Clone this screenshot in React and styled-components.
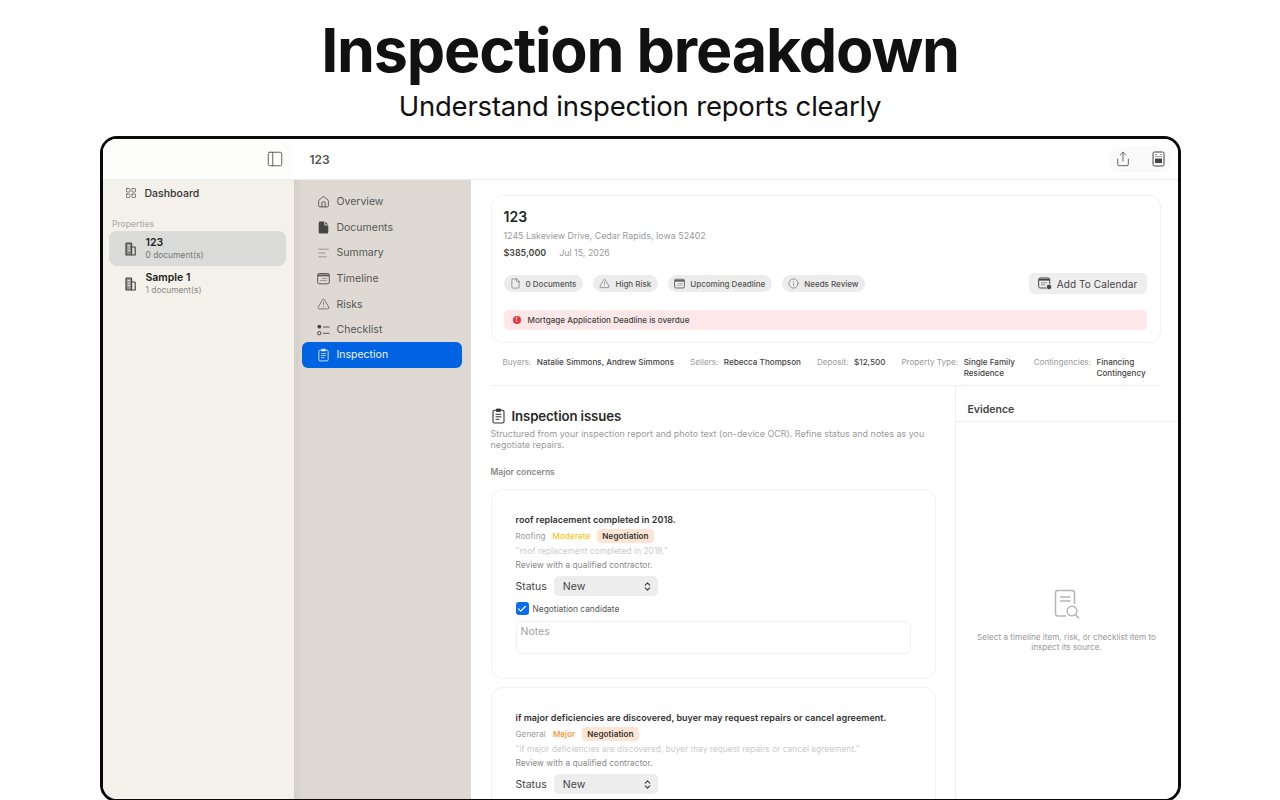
import React from "react";
import styled, { createGlobalStyle } from "styled-components";
import { LayoutGrid, House, TriangleAlert, Share, AlignLeft, Check, ChevronsUpDown, PanelLeft, File, Info } from "lucide-react";

const Global = createGlobalStyle`
  html, body { margin: 0; padding: 0; background: #fff; height: 800px; overflow: hidden; }
  body { font-family: Inter, "Liberation Sans", sans-serif; color: #222; }
  * { box-sizing: border-box; }
`;

const Page = styled.div`
  width: 1280px; height: 800px; overflow: hidden; display: flex; flex-direction: column; align-items: center;
`;
const Hero = styled.header`
  height: 136px; flex: none; width: 100%; text-align: center; padding-top: 12px;
`;
const HeroTitle = styled.h1`
  margin: 0; font-size: 61px; line-height: 76px; font-weight: 700; color: #111; letter-spacing: -1.2px;
`;
const HeroSub = styled.p`
  margin: 0; font-size: 27.5px; line-height: 37px; font-weight: 400; color: #111; letter-spacing: -0.2px;
`;
const Frame = styled.section`
  position: relative; width: 1081px; height: 666px; flex: none; border: 3px solid #0a0a0a; border-radius: 17px;
  display: flex; flex-direction: column; background: #fff;
  &::before { content: ""; position: absolute; left: -3px; right: -3px; top: -2px; height: 1px; background: #555; z-index: -1; }
`;
const Clip = styled.div`
  flex: 1; min-height: 0; display: flex; flex-direction: column; overflow: hidden; border-radius: 14px;
`;
const TopBar = styled.div`
  height: 41px; flex: none; display: flex; align-items: center; border-bottom: 1px solid #ececea; background: #fff;
`;
const TopLeft = styled.div`
  width: 191px; height: 100%; display: flex; align-items: center; justify-content: flex-end; padding-right: 10px;
  background: #fdfdfc; border-top-right-radius: 14px; color: #555;
`;
const TopTitle = styled.div`
  margin-left: 16px; font-size: 12px; font-weight: 600; color: #555; flex: 1;
`;
const ToolCapsule = styled.div`
  width: 64px; height: 26px; margin-right: 6px; border-radius: 13px; background: #fafafa; display: flex; align-items: center;
  justify-content: space-between; padding: 0 7px 0 7px; color: #555;
`;
const Body = styled.div`
  flex: 1; min-height: 0; display: flex;
`;
const Sidebar = styled.aside`
  width: 191px; flex: none; background: #f4f1ea; padding: 3px 8px 0 6px;
`;
const DashRow = styled.div`
  height: 20px; display: flex; align-items: center; gap: 8px; padding-left: 16px; font-size: 10.5px; font-weight: 500; color: #333;
`;
const SideLabel = styled.div`
  margin: 15px 0 0 3.5px; height: 12px; line-height: 12px; font-size: 8.5px; font-weight: 500; color: #b0aeaa;
`;
const PropRow = styled.div`
  height: 35px; margin-top: ${p => p.$first ? "1px" : "0"}; border-radius: 8px; display: flex; align-items: center; gap: 10px; padding-left: 16px;
  background: ${p => p.$active ? "#dbdbda" : "transparent"}; color: #555;
`;
const PropText = styled.div`
  display: flex; flex-direction: column; gap: 1px;
`;
const PropName = styled.div`
  font-size: 10.5px; line-height: 13px; font-weight: 600; color: #222;
`;
const PropCount = styled.div`
  font-size: 8.4px; line-height: 11px; color: ${p => p.$active ? "#777" : "#8a8a88"};
`;
const SubNav = styled.nav`
  width: 177px; flex: none; padding: 9px 9px 0 8px; background: linear-gradient(90deg, #d2cfc8 0, #dedad3 10px);
`;
const NavItem = styled.div`
  height: 25.6px; border-radius: 6px; display: flex; align-items: center; gap: 7px; padding-left: 15px; font-size: 10.5px;
  color: #555; font-weight: 400;
`;
const NavActive = styled(NavItem)`
  height: 26px; margin-top: -0.6px; background: #0063e1; color: #f2f6fd;
`;
const IconSlot = styled.span`
  width: 13px; height: 14px; display: flex; align-items: center; justify-content: center; flex: none; color: ${p => p.$color || "#444"};
`;
const Main = styled.main`
  flex: 1; min-width: 0; display: flex; flex-direction: column; background: #fff;
`;
const TopSection = styled.div`
  padding: 15px 17px 0 20px; flex: none;
`;
const Summary = styled.div`
  height: 148px; border: 1px solid #f1f1f0; border-radius: 12px; padding: 12px 13px 0 12px;
`;
const SumTitle = styled.div`
  font-size: 14px; line-height: 18px; font-weight: 600; color: #222;
`;
const Address = styled.div`
  margin-top: 4px; font-size: 8.9px; line-height: 12px; color: #9a9a9a;
`;
const PriceRow = styled.div`
  margin-top: 5px; display: flex; gap: 13px; font-size: 8.9px; line-height: 12px; color: #9a9a9a;
`;
const Price = styled.span`
  font-weight: 600; color: #444;
`;
const BadgeRow = styled.div`
  margin-top: 14px; height: 21px; display: flex; align-items: center; justify-content: space-between;
`;
const Pills = styled.div`
  display: flex; gap: 10px;
`;
const Pill = styled.div`
  height: 17px; border-radius: 9px; background: #ececec; display: flex; align-items: center; gap: 5px; padding: 0 7px 0 6px;
  font-size: 8px; font-weight: 500; color: #555;
`;
const CalButton = styled.div`
  width: 118px; height: 21px; border-radius: 5px; background: #eeeeee; display: flex; align-items: center; justify-content: center; gap: 5px;
  font-size: 10px; color: #444; letter-spacing: 0.1px;
`;
const Alert = styled.div`
  margin-top: 16px; height: 20px; border-radius: 5px; background: #fde7e8; display: flex; align-items: center; gap: 7px; padding-left: 9px;
  font-size: 8.1px; font-weight: 500; color: #444;
`;
const AlertDot = styled.span`
  width: 8px; height: 8px; border-radius: 50%; background: #f0313b; color: #fde7e8; font-size: 6px; line-height: 8px; text-align: center; font-weight: 700;
`;
const MetaRow = styled.div`
  height: 43px; display: flex; gap: 16px; padding: 14px 0 0 12px; border-bottom: 1px solid #f0f0ef; font-size: 8.1px; line-height: 10.5px;
`;
const MetaItem = styled.div`
  display: flex; gap: 5.5px; align-items: flex-start; flex: none;
`;
const MetaLabel = styled.span`
  color: #9a9a9a; white-space: nowrap;
`;
const MetaValue = styled.span`
  color: #444; font-weight: 500; width: ${p => p.$w || "auto"}; white-space: ${p => p.$w ? "normal" : "nowrap"};
`;
const Split = styled.div`
  flex: 1; min-height: 0; display: flex;
`;
const Issues = styled.div`
  width: 484px; flex: none; padding: 20px 19px 0 20px; overflow: hidden;
`;
const IssuesHead = styled.div`
  display: flex; align-items: center; gap: 7px; height: 20px; margin-left: 1px;
`;
const IssuesTitle = styled.h2`
  margin: 0; font-size: 13.2px; font-weight: 600; color: #2a2a2a; letter-spacing: -0.1px;
`;
const IssuesDesc = styled.p`
  margin: 3px 0 0; font-size: 8.95px; line-height: 10.5px; color: #9a9a9a;
`;
const SectionLabel = styled.div`
  margin-top: 16px; font-size: 8.5px; line-height: 12px; font-weight: 600; color: #888;
`;
const IssueCard = styled.article`
  margin-top: ${p => p.$first ? "11px" : "8px"}; height: 190px; flex: none; border: 1px solid #f1f1f0; border-radius: 12px; padding: 24px 24px 0;
`;
const IssueTitle = styled.div`
  font-size: 9px; line-height: 12px; font-weight: 600; color: #333; letter-spacing: 0.03px; white-space: nowrap;
`;
const IssueMeta = styled.div`
  margin-top: 3px; height: 14px; display: flex; align-items: center; font-size: 8.1px; color: #9a9a9a; letter-spacing: 0.08px;
`;
const Severity = styled.span`
  margin-left: 7px; color: ${p => p.$color}; font-weight: 500;
`;
const Tag = styled.span`
  margin-left: 7px; height: 14px; padding: 0 5px; border-radius: 4px; background: #fde4d3; color: #333; font-weight: 600; display: flex; align-items: center;
`;
const Quote = styled.div`
  margin-top: 2px; font-size: 8.3px; line-height: 12px; color: #cbcbcb; letter-spacing: 0.05px; white-space: nowrap;
`;
const Review = styled.div`
  margin-top: 2px; font-size: 8.3px; line-height: 12px; color: #888; letter-spacing: 0.07px;
`;
const StatusRow = styled.div`
  margin-top: 5px; display: flex; align-items: center; gap: 7px; font-size: 10.5px; color: #444;
`;
const Select = styled.div`
  width: 104px; height: 20px; border-radius: 5px; background: #ededed; display: flex; align-items: center; justify-content: space-between;
  padding: 0 5px 0 9px; color: #444;
`;
const CheckRow = styled.div`
  margin-top: 6px; height: 13px; display: flex; align-items: center; gap: 4px; font-size: 8.3px; color: #555; letter-spacing: 0.03px;
`;
const CheckBox = styled.span`
  width: 13px; height: 13px; border-radius: 3px; background: #0a6cf0; color: #fff; display: flex; align-items: center; justify-content: center;
`;
const Notes = styled.div`
  margin-top: 6px; height: 33px; width: 395px; border: 1px solid #f0f0ef; border-radius: 6px; padding: 3px 4px; font-size: 10.5px; line-height: 14px; color: #a0a0a0;
`;
const Evidence = styled.aside`
  flex: 1; min-width: 0; display: flex; flex-direction: column; border-left: 1px solid #eeeeed;
`;
const EvidenceHead = styled.div`
  height: 36px; flex: none; display: flex; align-items: center; padding: 12px 0 0 12px; border-bottom: 1px solid #eeeeed;
  font-size: 10.5px; font-weight: 600; color: #444;
`;
const EmptyState = styled.div`
  flex: 1; display: flex; flex-direction: column; align-items: center; justify-content: center; padding: 20px 20px 0; text-align: center;
`;
const EmptyText = styled.p`
  margin: 11px 0 0; font-size: 8.2px; line-height: 10.5px; color: #999; width: 190px;
`;

const Building = () => (
  <svg width="11" height="14" viewBox="0 0 11 14" fill="none">
    <path d="M1 13V1.6C1 1.2 1.3 1 1.6 1H6C6.400 1 6.600 1.200 6.600 1.600V13Z" stroke="#444" strokeWidth="1.2" fill="#555" fillOpacity=".6" />
    <path d="M6.600 5H9.600C10 5 10.200 5.200 10.200 5.600V13H6.600" stroke="#444" strokeWidth="1.2" />
    <path d="M2.600 3.500H5M2.600 6H5M2.600 8.500H5M8 7.500H9M8 10H9" stroke="#e6e4de" strokeWidth="1" />
  </svg>
);
const DocFill = () => (
  <svg width="11" height="13" viewBox="0 0 11 13"><path d="M2 .5H6.300V3.600C6.300 4.100 6.700 4.500 7.200 4.500H10.300V11C10.300 11.900 9.800 12.500 8.900 12.500H2C1.100 12.500.7 11.900.7 11V2C.7 1.100 1.100.5 2 .5ZM7.300.7L10.100 3.500H7.300Z" fill="#444" /></svg>
);
const CalIcon = ({ size = 13 }) => (
  <svg width={size} height={size} viewBox="0 0 13 13" fill="none">
    <rect x=".7" y="1.500" width="11.600" height="10.300" rx="1.500" stroke="currentColor" strokeWidth="1" />
    <path d="M1 2.500H12V4.300H1Z" fill="currentColor" />
    <path d="M5 6.500H10M3 8.500H10" stroke="currentColor" strokeWidth=".8" opacity=".6" />
  </svg>
);
const ChecklistIcon = () => (
  <svg width="13" height="12" viewBox="0 0 13 12" fill="none">
    <circle cx="2.300" cy="2.700" r="1.900" fill="#444" />
    <circle cx="2.300" cy="9.200" r="1.700" stroke="#444" strokeWidth="1" />
    <path d="M6 3H12.500M6 9.300H12.500" stroke="#555" strokeWidth="1" />
  </svg>
);
const DocBadge = () => (
  <svg width="13" height="16" viewBox="0 0 13 16" fill="none">
    <rect x="1" y="1" width="11" height="14" rx="1.500" stroke="#444" strokeWidth="1" />
    <path d="M3 3.500H5M8 3.500H10M3 5.500H10" stroke="#888" strokeWidth=".8" />
    <rect x="3" y="7.500" width="7" height="4.500" fill="#444" />
  </svg>
);
const CalAdd = () => (
  <svg width="14" height="13" viewBox="0 0 14 13" fill="none">
    <rect x=".7" y="1" width="11" height="10" rx="1.500" stroke="#444" strokeWidth="1" />
    <path d="M1 1.800H11.500V3.600H1Z" fill="#444" />
    <path d="M3 5.800H9M3 7.800H7" stroke="#777" strokeWidth=".8" />
    <circle cx="11" cy="10" r="2.700" fill="#444" stroke="#eee" strokeWidth=".8" />
  </svg>
);
const ClipboardDoc = ({ w = 13, h = 16, color = "currentColor" }) => (
  <svg width={w} height={h} viewBox="0 0 13 16" fill="none" stroke={color}>
    <path d="M3.500 2.300H2.500C1.500 2.300 1 2.900 1 3.800V13.500C1 14.500 1.500 15 2.500 15H10.500C11.500 15 12 14.500 12 13.500V3.800C12 2.900 11.500 2.300 10.500 2.300H9.500" strokeWidth="1.100" />
    <rect x="4" y="1" width="5" height="2.400" rx=".7" fill={color} strokeWidth=".8" />
    <path d="M3.600 6.300H9.400M3.600 8.800H9.400M3.600 11.300H7.500" strokeWidth="1" />
  </svg>
);
const ReportSearch = () => (
  <svg width="26" height="32" viewBox="0 0 26 32" fill="none" stroke="#b5b5b5">
    <path d="M12 27H4C2.500 27 1.500 26 1.500 24.500V4C1.500 2.500 2.500 1.500 4 1.500H18C19.500 1.500 20.500 2.500 20.500 4V15" strokeWidth="1.500" />
    <path d="M6 8H16.500M6 12H16.500" strokeWidth="1.500" />
    <circle cx="18" cy="22" r="4.800" strokeWidth="1.500" />
    <path d="M21.500 25.500L25 29.500" strokeWidth="1.700" />
  </svg>
);

const navs = [
  ["Overview", <House size={14} strokeWidth={1.5} />, "#444"],
  ["Documents", <DocFill />, "#444"],
  ["Summary", <AlignLeft size={14} strokeWidth={1.2} />, "#777"],
  ["Timeline", <CalIcon />, "#555"],
  ["Risks", <TriangleAlert size={14} strokeWidth={1.2} />, "#444"],
  ["Checklist", <ChecklistIcon />, "#444"],
];

const Issue = ({ first, title, cat, sev, sevColor, belowFold }) => (
  <IssueCard $first={first}>
    <IssueTitle>{title}</IssueTitle>
    <IssueMeta>
      {cat}
      <Severity $color={sevColor}>{sev}</Severity>
      <Tag>Negotiation</Tag>
    </IssueMeta>
    <Quote>"{title}"</Quote>
    <Review>Review with a qualified contractor.</Review>
    <StatusRow>
      Status
      <Select>New<ChevronsUpDown size={11} strokeWidth={2.2} color="#333" /></Select>
    </StatusRow>
    {!belowFold && (
      <>
        <CheckRow>
          <CheckBox><Check size={10} strokeWidth={3} /></CheckBox>
          Negotiation candidate
        </CheckRow>
        <Notes>Notes</Notes>
      </>
    )}
  </IssueCard>
);

export default function App() {
  return (
    <Page>
      <Global />
      <Hero>
        <HeroTitle>Inspection breakdown</HeroTitle>
        <HeroSub>Understand inspection reports clearly</HeroSub>
      </Hero>
      <Frame>
        <Clip>
          <TopBar>
            <TopLeft><PanelLeft size={18} strokeWidth={1.1} color="#444" /></TopLeft>
            <TopTitle>123</TopTitle>
            <ToolCapsule>
              <Share size={16} strokeWidth={1.2} color="#444" />
              <DocBadge />
            </ToolCapsule>
          </TopBar>
          <Body>
            <Sidebar>
              <DashRow><LayoutGrid size={12} strokeWidth={1.3} color="#444" />Dashboard</DashRow>
              <SideLabel>Properties</SideLabel>
              <PropRow $active $first>
                <Building />
                <PropText><PropName>123</PropName><PropCount $active>0 document(s)</PropCount></PropText>
              </PropRow>
              <PropRow>
                <Building />
                <PropText><PropName>Sample 1</PropName><PropCount>1 document(s)</PropCount></PropText>
              </PropRow>
            </Sidebar>
            <SubNav>
              {navs.map(([label, icon, color]) => (
                <NavItem key={label}><IconSlot $color={color}>{icon}</IconSlot>{label}</NavItem>
              ))}
              <NavActive><IconSlot $color="#dbe8fc"><ClipboardDoc w={11} h={14} /></IconSlot>Inspection</NavActive>
            </SubNav>
            <Main>
              <TopSection>
                <Summary>
                  <SumTitle>123</SumTitle>
                  <Address>1245 Lakeview Drive, Cedar Rapids, Iowa 52402</Address>
                  <PriceRow><Price>$385,000</Price><span>Jul 15, 2026</span></PriceRow>
                  <BadgeRow>
                    <Pills>
                      <Pill><File size={11} strokeWidth={1.2} />0 Documents</Pill>
                      <Pill><TriangleAlert size={11} strokeWidth={1.2} />High Risk</Pill>
                      <Pill><CalIcon size={11} />Upcoming Deadline</Pill>
                      <Pill><Info size={11} strokeWidth={1.2} />Needs Review</Pill>
                    </Pills>
                    <CalButton><CalAdd />Add To Calendar</CalButton>
                  </BadgeRow>
                  <Alert><AlertDot>!</AlertDot>Mortgage Application Deadline is overdue</Alert>
                </Summary>
                <MetaRow>
                  <MetaItem><MetaLabel>Buyers:</MetaLabel><MetaValue>Natalie Simmons, Andrew Simmons</MetaValue></MetaItem>
                  <MetaItem><MetaLabel>Sellers:</MetaLabel><MetaValue>Rebecca Thompson</MetaValue></MetaItem>
                  <MetaItem><MetaLabel>Deposit:</MetaLabel><MetaValue>$12,500</MetaValue></MetaItem>
                  <MetaItem><MetaLabel>Property Type:</MetaLabel><MetaValue $w="54px">Single Family Residence</MetaValue></MetaItem>
                  <MetaItem><MetaLabel>Contingencies:</MetaLabel><MetaValue $w="52px">Financing Contingency</MetaValue></MetaItem>
                </MetaRow>
              </TopSection>
              <Split>
                <Issues>
                  <IssuesHead>
                    <ClipboardDoc color="#333" />
                    <IssuesTitle>Inspection issues</IssuesTitle>
                  </IssuesHead>
                  <IssuesDesc>Structured from your inspection report and photo text (on-device OCR). Refine status and notes as you negotiate repairs.</IssuesDesc>
                  <SectionLabel>Major concerns</SectionLabel>
                  <Issue first title="roof replacement completed in 2018." cat="Roofing" sev="Moderate" sevColor="#fcc419" />
                  <Issue belowFold title="if major deficiencies are discovered, buyer may request repairs or cancel agreement." cat="General" sev="Major" sevColor="#fb8c28" />
                </Issues>
                <Evidence>
                  <EvidenceHead>Evidence</EvidenceHead>
                  <EmptyState>
                    <ReportSearch />
                    <EmptyText>Select a timeline item, risk, or checklist item to inspect its source.</EmptyText>
                  </EmptyState>
                </Evidence>
              </Split>
            </Main>
          </Body>
        </Clip>
      </Frame>
    </Page>
  );
}
